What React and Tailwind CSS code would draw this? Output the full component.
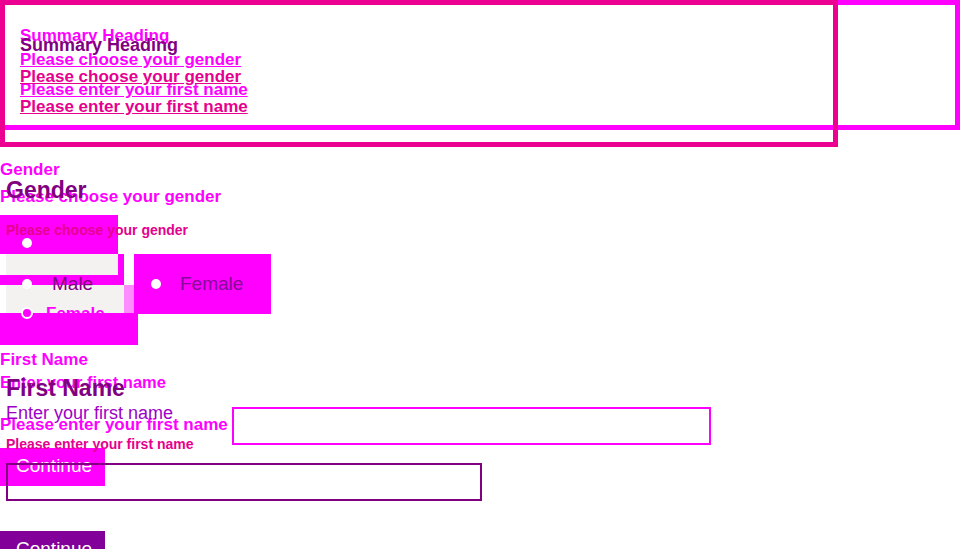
import React from "react";

const Dot = ({ className = "" }) => (
  <span className={`block w-[10px] h-[10px] rounded-full bg-white shrink-0 ${className}`} />
);

// first render, drawn in magenta
const LayerA = () => (
  <div className="col-start-1 row-start-1 flex flex-col items-start">
    <div className="w-[960px] h-[130px] border-[5px] border-[#ff00ff] pl-[15px] pt-[21px]">
      <h2 className="text-[17px] leading-[19px] font-bold text-[#ff00ff]">Summary Heading</h2>
      <ul className="text-[17px] leading-[30px] font-bold text-[#ff00ff]">
        <li><a className="underline">Please choose your gender</a></li>
        <li><a className="underline">Please enter your first name</a></li>
      </ul>
    </div>

    <div className="mt-[30px] text-[17px] leading-[19px] font-bold text-[#ff00ff]">Gender</div>
    <div className="mt-[8px] text-[17px] leading-[19px] font-bold text-[#ff00ff]">Please choose your gender</div>

    {/* radios */}
    <div className="mt-[9px] w-[118px] h-[39px] bg-[#ff00ff] pt-[23px] pl-[22px]">
      <Dot />
    </div>
    <div className="flex h-[21px]">
      <div className="w-[118px]" />
      <div className="relative z-10 w-[6px] bg-[#ff00ff]" />
    </div>
    <div className="relative z-10 w-[124px] h-[10px] bg-[#ff00ff]" />
    <div className="flex h-[28px]">
      <div className="relative z-10 w-[124px] overflow-hidden pl-[46px] pt-[19px] text-[17px] leading-[19px] font-bold text-[#ff00ff]">
        Female
      </div>
      <div className="relative z-10 w-[10px] bg-[#ff8cff]" />
    </div>
    <div className="relative z-10 w-[138px] h-[32px] bg-[#ff00ff]">
      <span className="block -mt-[6px] ml-[21px] w-[12px] h-[12px] rounded-full border-2 border-white bg-[#ff00ff]" />
    </div>

    <div className="mt-[5px] text-[17px] leading-[19px] font-bold text-[#ff00ff]">First Name</div>
    <div className="mt-[4px] text-[16.5px] leading-[19px] font-bold text-[#ff00ff]">Enter your first name</div>
    <div className="mt-[15px] flex items-start gap-[4px] h-[38px]">
      <span className="mt-[8px] text-[17px] leading-[19px] font-bold text-[#ff00ff]">Please enter your first name</span>
      <div className="w-[479px] h-[38px] border-2 border-[#ff00ff]" />
    </div>
    <button className="mt-[3px] w-[105px] h-[38px] bg-[#ff00ff] px-[16px] pb-[2px] flex items-center text-[19px] text-white">
      Continue
    </button>
  </div>
);

// second render, purple and pink
const LayerB = () => (
  <div className="col-start-1 row-start-1 flex flex-col items-start">
    <div className="w-[838px] h-[147px] border-[5px] border-[#ec0092] pl-[15px] pt-[30px]">
      <h2 className="text-[18px] leading-[21px] font-bold text-[#800080]">Summary Heading</h2>
      <ul className="mt-[6px] text-[17px] leading-[30px] font-bold text-[#e6008e]">
        <li><a className="underline">Please choose your gender</a></li>
        <li><a className="underline">Please enter your first name</a></li>
      </ul>
    </div>

    <div className="mt-[30px] ml-[6px] text-[23px] leading-[26px] font-bold text-[#800080]">Gender</div>
    <div className="mt-[19px] ml-[6px] text-[14px] leading-[16px] font-bold text-[#e6008e]">Please choose your gender</div>

    <div className="mt-[16px] ml-[6px] flex gap-[10px]">
      <div className="w-[118px] h-[60px] bg-[#f3f2f1] flex items-center">
        <Dot className="relative z-20 ml-[16px]" />
        <span className="relative z-20 ml-[20px] text-[19px] text-[#800080]">Male</span>
      </div>
      <div className="w-[137px] h-[60px] bg-[#ff00ff] flex items-center">
        <Dot className="ml-[17px]" />
        <span className="ml-[19px] text-[19px] text-[#860a96]">Female</span>
      </div>
    </div>

    <div className="mt-[61px] ml-[6px] text-[23px] leading-[26px] font-bold text-[#800080]">First Name</div>
    <div className="mt-[2px] ml-[6px] text-[18px] leading-[21px] text-[#9c00c6]">Enter your first name</div>
    <div className="mt-[12px] ml-[6px] text-[14px] leading-[16px] font-bold text-[#e6008e]">Please enter your first name</div>
    <div className="mt-[11px] ml-[6px] w-[476px] h-[38px] border-2 border-[#800080]" />
    <button className="mt-[30px] w-[105px] h-[38px] bg-[#820099] px-[16px] pb-[2px] flex items-center text-[19px] text-white">
      Continue
    </button>
  </div>
);

export default function App() {
  return (
    <div className="w-[960px] h-[549px] overflow-hidden bg-white font-['Liberation_Sans',Arial,sans-serif]">
      <div className="grid">
        <LayerA />
        <LayerB />
      </div>
    </div>
  );
}
